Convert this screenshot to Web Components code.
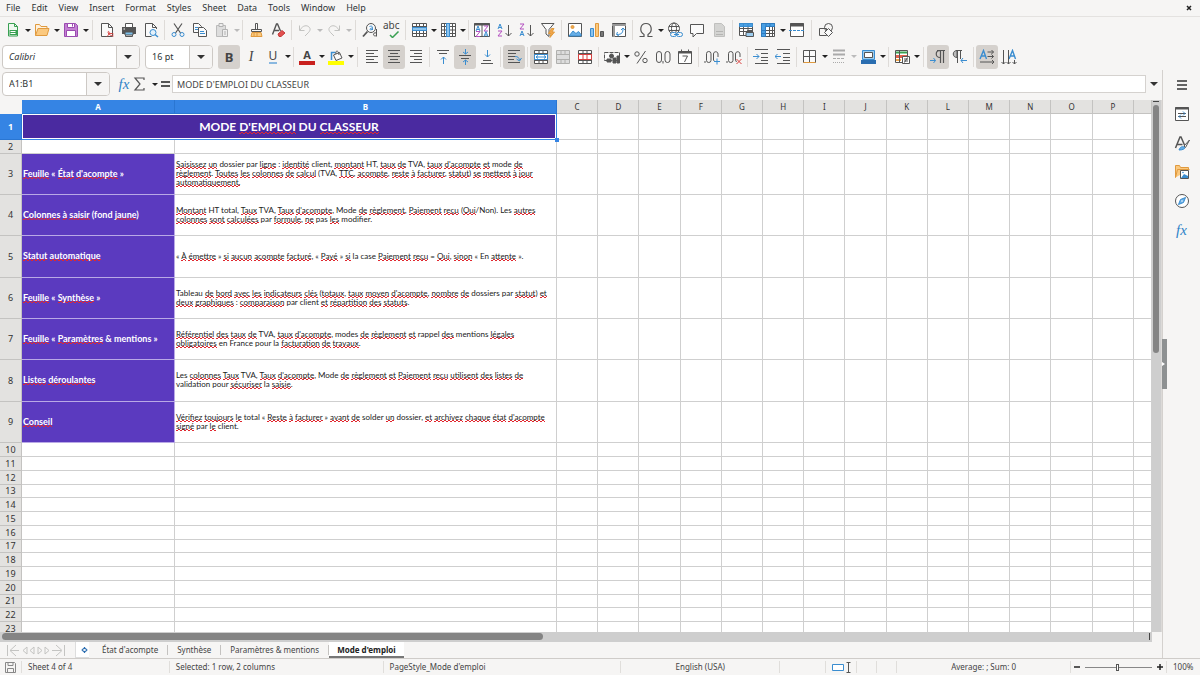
<!DOCTYPE html>
<html lang="en">
<head>
<meta charset="utf-8">
<title>Mode d'emploi - Calc</title>
<style>
html, body { margin: 0; height: 100%; }
body { font: 9px/12px "Noto Sans", sans-serif; color: #2e3436; background: #f6f5f4; overflow: hidden; }
</style>
</head>
<body>
<calc-app></calc-app>
<script>
const svg = (body, w = 16, h = 16) => `<svg width="${w}" height="${h}" viewBox="0 0 ${w} ${h}" fill="none" stroke="#555" stroke-width="1" aria-hidden="true">${body}</svg>`;
const B = '#3a8dd0', R = '#d8403f', O = '#e8a23c';
const lines = (rows) => rows.map(([x, y, w]) => `<path d="M${x} ${y + 0.5}h${w}"/>`).join('');
const tinyA = (x, y, c) => `<path d="M${x} ${y + 5}l2-5 2 5M${x + 1} ${y + 3.5}h2" stroke="${c}"/>`;
const tinyZ = (x, y, c) => `<path d="M${x} ${y}h4l-4 5h4" stroke="${c}"/>`;
const ICONS = {
  new: svg('<path d="M3.500 1.500h6l3 3v9.500h-9z" stroke="#39a052" fill="#eef8f0"/><path d="M9.500 1.500v3h3" stroke="#39a052"/><path d="M4.500 8h8v5h-8z" fill="#39a052" stroke="none"/><path d="M5.500 9.500h5M5.500 11.500h5" stroke="#fff"/>'),
  open: svg('<path d="M1.500 13.500v-11h4l1.500 2h6v2" stroke="#e09a3e" fill="#fff1dc"/><path d="M1.500 13.500l2.500-7h11l-2 7z" stroke="#e09a3e" fill="#fbc97f"/>'),
  save: svg('<path d="M1.500 1.500h11l2 2v11h-13z" stroke="#9a4bb0" fill="#c481d3"/><path d="M4.500 1.500h7v4h-7zM3.500 8.500h9v6h-9z" fill="#fff" stroke="#9a4bb0"/><path d="M9.500 2v2.500" stroke="#9a4bb0"/>'),
  pdf: svg('<path d="M3 1.500h6.500l4 4v9h-11v-13z" fill="#fafafa"/><path d="M9.500 1.500v4h4"/><path d="M8 14.500c3-3 2.500-5 1.500-5s-.5 4 5 4.500M9 12c2-1 4-.5 5.500 0" stroke="#d8403f"/>'),
  print: svg('<path d="M4.500 5v-3.500h7v3.500M4.500 12v2.500h7v-2.500" fill="#fff"/><path d="M1 5h14v7h-14z" fill="#555" stroke="none"/><path d="M4 10h8v3h-8z" fill="#7cc0ea" stroke="#555"/><path d="M2.500 7h1.500" stroke="#fff"/>'),
  preview: svg('<path d="M13.500 7v-1.500l-4-4h-7v13h6" fill="#fafafa"/><path d="M9.500 1.500v4h4"/><circle cx="10" cy="10.500" r="3" stroke="#3a8dd0" fill="#e3f1fb"/><path d="M12 12.500l3 2.500" stroke="#3a8dd0" stroke-width="1.500"/>'),
  cut: svg('<path d="M4 1.500l6.500 9.500M12 1.500l-6.500 9.500" stroke-width="1.200"/><circle cx="4" cy="12.500" r="2" stroke="#3a8dd0"/><circle cx="12" cy="12.500" r="2" stroke="#3a8dd0"/>'),
  copy: svg('<path d="M1.500 1.500h5l3 3v6h-8z" fill="#fafafa"/><path d="M6.500 5.500h5l3 3v6h-8z" fill="#fafafa"/><path d="M3 5.500h3M3 7.500h3M8 9.500h4M8 11.500h5" stroke="#3a8dd0"/>'),
  paste: svg('<path d="M2.500 3.500h9v11h-9z" fill="#ddd" stroke="#bbb"/><path d="M5 1.500h4v3h-4zM8.500 7.500h5v7h-5z" fill="#eee" stroke="#b2b2b2"/><path d="M10 10h2M10 12h2" stroke="#b2b2b2"/>'),
  brush: svg('<path d="M7.500 1.500h2v6h-2zM3.500 7.500h10v2h-10z" fill="#fafafa"/><path d="M4 10.500h9l1 4h-11z" fill="#fbc97f" stroke="#e09a3e"/><path d="M6 11v3M9 11v3" stroke="#e09a3e"/>'),
  clear: svg('<path d="M2.500 12.500l4-10.500h1l3 7M4 8.500h5" stroke-width="1.400"/><path d="M8 12l4-3.500 3 2.500-4 3.500h-2z" fill="#e2504f" stroke="#c43a3a"/>'),
  undo: svg('<path d="M2.500 3.500v5h5M3 8c3-5 7-5 9-3s1 4-1 6l-3 3" stroke="#c2c2c0"/>'),
  redo: svg('<path d="M13.500 3.500v5h-5M13 8c-3-5-7-5-9-3s-1 4 1 6l3 3" stroke="#c2c2c0"/>'),
  find: svg('<circle cx="9" cy="6" r="4.500" fill="#fafafa"/><path d="M5.500 9.500l-4.500 5" stroke-width="1.800"/><path d="M7.500 4.500c3-1 3 0 3 3.500M10.500 6c-3 0-3 2-1.500 2l1.500-1" stroke="#3a8dd0"/><path d="M14.500 7v7.500M14.500 11c-4-1.500-4 4.500 0 2.500"/>'),
  spell: svg('<path d="M6 13l2.500 2.500 6-6" stroke="#39a052" stroke-width="1.500"/>'),
  row: svg('<path d="M1.500 1.500h14v13h-14z" fill="#fff"/><path d="M1.500 4.500h14M1.500 11.500h14M5.500 1.500v13M8.500 1.500v13M12.500 1.500v13"/><path d="M1.500 5.500h14v3h-14z" fill="#8cc4ee" stroke="#3a8dd0"/>'),
  col: svg('<path d="M1.500 1.500h14v13h-14z" fill="#fff"/><path d="M1.500 4.500h14M1.500 8h14M1.500 11.500h14M4.500 1.500v13M12.500 1.500v13"/><path d="M6.500 1.500h3v13h-3z" fill="#8cc4ee" stroke="#3a8dd0"/>'),
  sort: svg('<path d="M.5 1.500h15v13h-15zM8 2v13" fill="#fff"/><path d="M0 2.500h16" stroke-width="2"/>' + tinyA(2, 4, B) + tinyZ(2, 9.5, '#b34fc0') + tinyZ(10, 4, '#b34fc0') + tinyA(10, 9.5, B)),
  az: svg(tinyA(2, 2, B) + tinyZ(2, 9, '#b34fc0') + '<path d="M12.500 3v11M9.500 11l3 3 3-3"/>'),
  za: svg(tinyZ(2, 2, '#b34fc0') + tinyA(2, 9, B) + '<path d="M12.500 3v11M9.500 11l3 3 3-3"/>'),
  filter: svg('<path d="M1.500 1.500h12.500l-5 6v7l-3-2.500v-4.500z" fill="#fafafa"/><path d="M11.500 6.500l-3 5h2.500l-1 4 4.500-5.500h-2.500l2-3.500z" fill="#f2a64a" stroke="#e09a3e"/>'),
  image: svg('<path d="M1.500 1.500h13v13h-13z" fill="#fff"/><path d="M2 14l4-5 3 2.500 2.500-2 2.500 3v1.500z" fill="#67aee6" stroke="#3a8dd0"/><circle cx="5.500" cy="5" r="1.500" fill="#f2a64a" stroke="#e09a3e"/>'),
  chart: svg('<path d="M1.500 6.500h3v8h-3z" fill="#8cc4ee" stroke="#3a8dd0"/><path d="M6.500 1.500h3v13h-3z" fill="#fbc97f" stroke="#e09a3e"/><path d="M11.500 9.500h3v5h-3z" fill="#777"/>'),
  pivot: svg('<path d="M1.500 1.500h13v13h-13z" fill="#fff"/><path d="M1 3h14M3 2v13" stroke="#999" stroke-width="2"/><path d="M6 12.500c5 0 6-2 6-6M6.500 10l-1 2.500 2.500 1.500M10 8l2-2 2 2" stroke="#3a8dd0"/>'),
  omega: svg('<path d="M1.500 14.500h4.500v-2c-5-3-4-11 2-11s7 8 2 11v2h4.500" stroke-width="1.200"/>'),
  link: svg('<circle cx="7" cy="6.500" r="5.500" fill="#fafafa"/><ellipse cx="7" cy="6.500" rx="2.500" ry="5.500"/><path d="M2 4.500h10M2 8.500h10"/><rect x="3.500" y="10.500" width="6" height="4" rx="2" stroke="#3a8dd0" fill="#f6f5f4"/><rect x="9.500" y="10.500" width="6" height="4" rx="2" stroke="#3a8dd0" fill="#f6f5f4"/><path d="M7 12.500h5" stroke="#3a8dd0"/>'),
  comment: svg('<path d="M1.500 2.500h13v9h-7l-3.500 3.500v-3.500h-2.500z" fill="#fafafa"/>'),
  header: svg('<path d="M3.500 1.500h7l3 3v10h-10z" fill="#d4d4d2" stroke="#c0c0be"/><path d="M5 9.500h7M5 12.500h7" stroke="#b5b5b3"/>'),
  area: svg('<path d="M1.500 1.500h13v12h-13zM1.500 6.500h13M1.500 9.500h13M5.500 1v13M10 1v13" fill="#fff"/><path d="M1.500 1.500h13v3h-13z" fill="#4aa0e4" stroke="#3a8dd0"/><path d="M5.500 2v2M10 2v2" stroke="#3a8dd0"/><path d="M8 10.500h7.500v4h-7.500z" fill="#9ccdf0"/><path d="M9.500 8.500h5v2h-5z" fill="#555"/>'),
  freeze: svg('<path d="M1.500 1.500h13v13h-13z" fill="#fff"/><path d="M1.500 8.500h13M1.500 11.500h13M9.500 1v13M12.500 1v13"/><path d="M1.500 1.500h13v3h-9v10h-4z" fill="#4aa0e4" stroke="#2f7cc0"/><path d="M2 8.500h4M2 11.500h4M6 2v3M10 2v3" stroke="#2f7cc0"/>'),
  split: svg('<path d="M1.500 1.500h13v13h-13z" fill="#fff"/><path d="M1 3h14" stroke-width="3"/><path d="M0 8.500h16" stroke="#3a8dd0" stroke-dasharray="3 1"/>'),
  shapes: svg('<circle cx="10.500" cy="5.500" r="4"/><path d="M1.500 6.500h7v7h-7z"/><path d="M10.500 6.500l4 4-4 4-4-4z" fill="#fafafa"/>'),
  left: svg(lines([[2, 1, 12], [2, 4, 8], [2, 7, 12], [2, 10, 8], [2, 13, 12]])),
  center: svg(lines([[2, 1, 12], [4, 4, 8], [2, 7, 12], [4, 10, 8], [2, 13, 12]])),
  right: svg(lines([[2, 1, 12], [6, 4, 8], [2, 7, 12], [6, 10, 8], [2, 13, 12]])),
  top: svg(lines([[2, 1, 12], [4, 4, 8]]) + '<path d="M8.500 15v-7M6 10.500l2.500-2.500 2.500 2.500" stroke="#3a8dd0"/>'),
  middle: svg(lines([[2, 6, 12], [4, 9, 8]]) + '<path d="M8.500 0v5M6 3l2.500 2 2.500-2M8.500 16v-5M6 13l2.500-2 2.500 2" stroke="#3a8dd0"/>'),
  bottom: svg(lines([[4, 11, 8], [2, 14, 12]]) + '<path d="M8.500 1v7M6 5.500l2.500 2.500 2.500-2.500" stroke="#3a8dd0"/>'),
  wrap: svg(lines([[2, 1, 12], [2, 4, 8], [2, 7, 7], [2, 10, 6], [2, 13, 12]]) + '<path d="M9 7.500c3 0 4 1 4.500 4M10.500 10l3 2 2-3" stroke="#3a8dd0"/>'),
  merge: svg('<path d="M1.500 1.500h13v13h-13zM1.500 4.500h13M1.500 11.500h13M6 1.500v3M10 1.500v3M6 11.500v3M10 11.500v3" fill="#fff"/><path d="M1.500 5.500h13v5h-13z" stroke="#3a8dd0" fill="#fff"/><path d="M3 8h10M5 6.500l-2 1.500 2 1.500M11 6.500l2 1.500-2 1.500" stroke="#3a8dd0"/>'),
  mergec: svg('<path d="M1.500 1.500h13v13h-13zM1.500 5.500h13M1.500 10.500h13M6 1.500v4M10 1.500v4M6 10.500v4M10 10.500v4" fill="#ddd" stroke="#b0b0ae"/>'),
  unmerge: svg('<path d="M1.500 1.500h13v13h-13zM1.500 4.500h13M1.500 11.500h13M6 1.500v3M10 1.500v3M6 11.500v3M10 11.500v3" fill="#fff"/><path d="M1.500 5.500h13v5h-13zM6 5.500v5M10 5.500v5" stroke="#d8403f" fill="#fff"/>'),
  money: svg('<path d="M.5 3.500h15v8h-15z" fill="#fafafa" stroke-dasharray="4 1"/><circle cx="7.500" cy="7" r="2" fill="#555"/><path d="M3 12v-2h4v3h-4zM9 9h3v5h-3zM13 7h2.500v7h-2.500z" fill="#555"/>'),
  percent: svg('<circle cx="4" cy="5" r="2.200"/><circle cx="12" cy="11.500" r="2.200"/><path d="M12.500 2l-8.500 12.500"/>'),
  number: svg('<rect x="1.500" y="2.500" width="5" height="11" rx="2.500"/><rect x="10" y="2.500" width="5" height="11" rx="2.500"/><path d="M8 12v2.500"/>'),
  date: svg('<path d="M1.500 2.500h13v12h-13z" fill="#fff"/><path d="M1.500 3.500h13" stroke-width="2"/><path d="M4.500 .5v3M11.500 .5v3M5.500 7h5l-3 6"/>'),
  adddec: svg('<path d="M1 12v2"/><rect x="2.500" y="2.500" width="4.500" height="11" rx="2.200"/><path d="M14 8v-3c0-3-4.500-3-4.500 0v6l1 1.500"/><path d="M10 12.500h6M13 9.500v6" stroke="#3a8dd0"/>'),
  deldec: svg('<path d="M1 12v2"/><rect x="2.500" y="2.500" width="4.500" height="11" rx="2.200"/><path d="M14 8v-3c0-3-4.500-3-4.500 0v6l1 2"/><path d="M10.500 10l5 5M15.500 10l-5 5" stroke="#d8403f"/>'),
  indent: svg(lines([[2, 0, 13], [8, 4, 7], [8, 8, 7], [8, 11, 7], [2, 14, 13]]) + '<path d="M0 7.500h6M3.500 5l2.500 2.500-2.500 2.500" stroke="#3a8dd0"/>'),
  outdent: svg(lines([[2, 0, 13], [8, 4, 7], [8, 8, 7], [8, 11, 7], [2, 14, 13]]) + '<path d="M6 7.500h-6M2.500 5l-2.500 2.500 2.500 2.500" stroke="#3a8dd0"/>'),
  borders: svg('<path d="M1.500 1.500h12v12h-12zM7.500 1.500v12M1.500 7.500h12" fill="#fafafa"/><path d="M1.500 13.500h12" stroke="#e09a3e"/>'),
  style: svg('<path d="M2 1.500h12M2 5.500h12" stroke="#aaa" stroke-width="2"/><path d="M2 9.500h12" stroke="#aaa" stroke-dasharray="3 1"/><path d="M2 13.500h12" stroke="#aaa" stroke-dasharray="1 1"/>'),
  bcolor: svg('<path d="M2.500 1.500h12v9h-12z" stroke="#3a8dd0" fill="#9ccdf0"/><path d="M4.500 3.500h8v5h-8z" fill="#fff"/><path d="M1 11h15v4h-15z" fill="#2a6db0" stroke="none"/>'),
  cond: svg('<path d="M1.500 1.500h12v12h-12z" fill="#fff"/><path d="M2 3.500h11" stroke="#39a052" stroke-width="2"/><path d="M2 7.500h11" stroke="#e2604f" stroke-width="3"/><path d="M2 11h5" stroke="#f2a64a" stroke-width="2"/><path d="M5.500 1.500v12"/><path d="M8.500 7.500h7v7h-7z" fill="#fff"/><path d="M10 10h4M10 12h4M13.500 8.500l-3 5"/>'),
  ltr: svg('<path d="M10.500 1v13M13.500 1v13M7 1.500h8M10 8.500c-5 0-5-7 0-7" stroke-width="1.200"/><path d="M0 11.500h5.500M3.500 9l2 2.500-2 2.500" stroke="#3a8dd0"/>'),
  rtl: svg('<path d="M5.500 1v13M8.500 1v9M4 1.500h6M5 8.500c-5 0-5-7 0-7z" fill="#bbb"/><path d="M15 11.500h-6M11 9l-2 2.500 2 2.500" stroke="#3a8dd0"/>'),
  horiz: svg('<path d="M1 10l3.500-8.500 3 8.500M2 7h5" stroke="#3a8dd0" stroke-width="1.400"/><path d="M8.500 3h6M8.500 7.500h6M1 13h14M12.500 1l2 2-2 2M12.500 5.500l2 2-2 2M13 11l2 2-2 2"/>'),
  vert: svg('<path d="M8 10l3.500-8.500 3 8.500M9 7h5" stroke="#3a8dd0" stroke-width="1.400"/><path d="M2.500 1v14M7.500 1v14M13.500 11v4M.5 13l2 2 2-2M5.500 13l2 2 2-2M11.500 13l2 2 2-2"/>'),
  sum: svg('<path d="M12 4v-2h-9l5 6-5 6h9v-2" stroke-width="1.200"/>'),
  equal: svg('<path d="M4 6h9M4 10h9" stroke-width="2"/>'),
  props: svg('<path d="M1.500 1.500h13v13h-13z" fill="#fff"/><path d="M1 2.500h14" stroke-width="2"/><path d="M4 7.500h8M4 10.500h8"/><path d="M9 5.500l2 2-2 2M7 8.500l-2 2 2 2" stroke="#3a8dd0"/>'),
  styles: svg('<path d="M1.500 13l4.500-11h1l3.500 8M3.500 9.500h5" stroke-width="1.500"/><path d="M15.500 5l-5.500 6 1.500 1.500z" fill="#fff"/><path d="M5 15c1-3 3-4 5-3s0 3-5 3z" fill="#67aee6" stroke="#3a8dd0"/>'),
  gallery: svg('<path d="M1.500 13.500v-12h4l1 2h8v2M1.500 13.500l2-8h12" stroke="#e09a3e" fill="#fbc97f"/><path d="M6.500 6.500h8v8h-8z" fill="#fff"/><path d="M7 14l3-4 4 2v2z" fill="#3a8dd0" stroke="none"/><circle cx="9" cy="8.500" r=".8" fill="#3a8dd0" stroke="none"/>'),
  compass: svg('<circle cx="8" cy="8" r="6.500" fill="#fff"/><path d="M11.500 4.500l-2 5-5 2 2-5z" fill="#67aee6" stroke="#3a8dd0"/><circle cx="8" cy="8" r=".8" fill="#fff" stroke="none"/>'),
  menu: svg('<path d="M3 4h10M3 8h10M3 12h10" stroke="#333" stroke-width="1.600"/>')
};
const letters = {
  bold: '<b class="bold">B</b>',
  italic: '<i class="italic">I</i>',
  underline: '<u class="u">U</u>',
  fontcolor: '<span class="bar" style="--bar:#c9211e">A</span>',
  fx: '<i class="fx">fx</i>',
  spell: '<span class="abc">abc</span>' + ICONS.spell,
  fill: `<span class="bar" style="--bar:#ffff00">${svg('<path d="M3.500 11v-7.500h4" stroke="#3a8dd0" stroke-width="1.500"/><path d="M5.500 6l6-2.500 2.500 5.500-6 2.500z" fill="#fafafa"/><path d="M8 5c-1-4 3-4 3 1"/>', 16, 12)}</span>`
};

class ToolButton extends HTMLElement {
  connectedCallback() {
    const name = this.getAttribute('icon'), drop = this.hasAttribute('drop'), off = this.hasAttribute('off');
    this.attachShadow({ mode: 'open' }).innerHTML = `<style>
      :host { display: flex; flex: none; align-items: center; }
      button { border: 0; background: none; padding: 0; font: inherit; color: #444; display: flex; align-items: center; justify-content: center; height: 24px; }
      .main { width: 22px; border-radius: 3px; position: relative; }
      :host([on]) .main { background: #d5d1cd; }
      .drop { width: 7px; }
      .drop::before { content: ""; border: 3px solid transparent; border-bottom: 0; border-top-color: ${off ? '#bbb' : '#222'}; }
      svg { display: block; }
      .bold { font: bold 13px/16px "Noto Sans", sans-serif; }
      .italic { font: italic 14px/16px "Liberation Serif", serif; }
      .u { font: 12px/13px "Noto Sans", sans-serif; text-decoration: none; border-bottom: 2px solid #8ab8e0; }
      .bar { font: bold 11px/12px "Noto Sans", sans-serif; width: 16px; border-bottom: 4px solid var(--bar); }
      .fx { font: italic 15px/18px "Liberation Serif", serif; color: #2f83c8; }
      .abc { font: 10px/12px "Noto Sans", sans-serif; position: absolute; top: 1px; left: 2px; }
    </style><button class="main" aria-label="${name}">${letters[name] || ICONS[name]}</button>${drop ? `<button class="drop" aria-label="${name} options"></button>` : ''}`;
  }
}
customElements.define('tool-button', ToolButton);

class ComboBox extends HTMLElement {
  connectedCallback() {
    this.attachShadow({ mode: 'open' }).innerHTML = `<style>
      :host { display: flex; flex: none; box-sizing: border-box; height: 24px; border: 1px solid #cdc9c5; border-radius: 4px; background: #fff; overflow: hidden; }
      input { flex: 1; min-width: 0; border: 0; padding: 0 0 0 6px; font: inherit; color: #2e3436; background: none; outline: 0; }
      button { width: 23px; border: 0; border-left: 1px solid #cdc9c5; background: #f6f5f4; padding: 0; display: flex; align-items: center; justify-content: center; }
      button::before { content: ""; border: 4px solid transparent; border-bottom: 0; border-top-color: #333; }
    </style><input aria-label="${this.getAttribute('label')}" value="${this.getAttribute('value')}"><button aria-label="Open list"></button>`;
  }
}
customElements.define('combo-box', ComboBox);

class MenuBar extends HTMLElement {
  connectedCallback() {
    this.attachShadow({ mode: 'open' }).innerHTML = `<style>
      :host { display: flex; height: 16px; border-bottom: 1px solid #e4e2e0; justify-content: space-between; }
      nav { display: flex; gap: 1px; padding-left: 1px; }
      button { border: 0; background: none; font: inherit; color: inherit; padding: 0 5px; white-space: nowrap; }
      .close { width: 22px; padding: 0; display: flex; align-items: center; justify-content: center; }
    </style><nav>${['File', 'Edit', 'View', 'Insert', 'Format', 'Styles', 'Sheet', 'Data', 'Tools', 'Window', 'Help'].map(m => `<button>${m}</button>`).join('')}</nav>
    <button class="close" aria-label="Close document">${svg('<path d="M1 1l4 4M5 1l-4 4" stroke="#222" stroke-width="1.500"/>', 6, 6)}</button>`;
  }
}
customElements.define('menu-bar', MenuBar);

class ToolBar extends HTMLElement {
  connectedCallback() {
    const items = this.getAttribute('items').trim().split(/\s+/).map(t => {
      if (t === '|') return '<i class="sep"></i>';
      if (t === '||') return '<i class="sep wide"></i>';
      const [name, ...flags] = t.split(':');
      return `<tool-button icon="${name}" ${flags.join(' ')}></tool-button>`;
    }).join('');
    this.attachShadow({ mode: 'open' }).innerHTML = `<style>
      :host { display: flex; align-items: center; padding: 0 2px; height: 26px; }
      .sep { flex: none; width: 5px; height: 20px; background: linear-gradient(#dedbd8, #dedbd8) center / 1px 100% no-repeat; }
      .wide { width: 7px; }
    </style><slot></slot>${items}`;
  }
}
customElements.define('tool-bar', ToolBar);

class FormulaBar extends HTMLElement {
  connectedCallback() {
    this.attachShadow({ mode: 'open' }).innerHTML = `<style>
      :host { display: flex; align-items: center; padding: 0 0 2px 2px; height: 28px; }
      combo-box { width: 108px; margin-right: 3px; }
      tool-button[icon=fx] { margin-right: -6px; }
      tool-button[icon=equal] { margin: 0 -4px; }
      .line { flex: 1; min-width: 0; box-sizing: border-box; height: 18px; border: 1px solid #d5d2cf; background: #fff; padding: 0 4px; font: inherit; color: #444; outline: 0; }
      .expand { width: 16px; height: 18px; border: 0; padding: 0; background: none; display: flex; align-items: center; justify-content: center; }
      .expand::before { content: ""; border: 4px solid transparent; border-bottom: 0; border-top-color: #333; }
    </style><combo-box label="Name box" value="A1:B1"></combo-box><tool-button icon="fx"></tool-button><tool-button icon="sum" drop></tool-button><tool-button icon="equal"></tool-button>
    <input class="line" aria-label="Formula" value="MODE D'EMPLOI DU CLASSEUR"><button class="expand" aria-label="Expand formula bar"></button>`;
  }
}
customElements.define('formula-bar', FormulaBar);

/* Words in [brackets] are underlined by the spelling checker; "/" between spaces breaks the line. */
const HELP = [
  ["[Feuille] « [État] [d'acompte] »", "[Saisissez] [un] dossier par [ligne] : [identité] client, [montant] HT, [taux] [de] TVA, [taux] [d'acompte] [et] mode [de] / [règlement]. [Toutes] [les] [colonnes] [de] [calcul] (TVA, [TTC], [acompte], [reste] [à] [facturer], [statut]) [se] [mettent] [à] [jour] / [automatiquement.]"],
  ["[Colonnes] [à] [saisir] (fond [jaune])", "[Montant] HT total, [Taux] TVA, [Taux] [d'acompte], Mode [de] [règlement], [Paiement] [reçu] ([Oui]/Non). Les [autres] / [colonnes] [sont] [calculées] par [formule], [ne] pas [les] modifier."],
  ["[Statut] [automatique]", "« [À] [émettre] » [si] [aucun] [acompte] [facturé], « [Payé] » [si] la case [Paiement] [reçu] = [Oui], [sinon] « En [attente] »."],
  ["[Feuille] « [Synthèse] »", "Tableau [de] [bord] [avec] [les] [indicateurs] [clés] ([totaux], [taux] [moyen] [d'acompte], [nombre] [de] dossiers par [statut]) [et] / [deux] [graphiques] : [comparaison] par client [et] [répartition] [des] [statuts]."],
  ["[Feuille] « [Paramètres] & mentions »", "[Référentiel] [des] [taux] [de] TVA, [taux] [d'acompte], modes [de] [règlement] [et] rappel [des] mentions [légales] / [obligatoires] en France pour la [facturation] [de] [travaux]."],
  ["[Listes] [déroulantes]", "Les [colonnes] [Taux] TVA, [Taux] [d'acompte], Mode [de] [règlement] [et] [Paiement] [reçu] [utilisent] [des] [listes] [de] / validation pour [sécuriser] la [saisie]."],
  ["[Conseil]", "[Vérifiez] [toujours] [le] total « [Reste] [à] [facturer] » [avant] [de] solder [un] dossier, [et] [archivez] [chaque] [état] [d'acompte] / [signé] par [le] client."]
];
const spell = t => t.replace(/&/g, '&amp;').replace(/ \/ /g, '<br>').replace(/\[(.*?)\]/g, '<s>$1</s>');

class SheetGrid extends HTMLElement {
  connectedCallback() {
    const cols = 'CDEFGHIJKLMNOP'.split('');
    const blank = '<td></td>'.repeat(15);
    const body = [`<tr class="r1"><th class="sel">1</th><td colspan="2" class="title">MODE ${spell("[D'EMPLOI]")} DU ${spell('[CLASSEUR]')}</td>${blank}</tr>`, `<tr><th>2</th><td></td><td></td>${blank}</tr>`];
    HELP.forEach(([a, b], i) => body.push(`<tr class="tall"><th>${i + 3}</th><td class="label">${spell(a)}</td><td class="text">${spell(b)}</td>${blank}</tr>`));
    for (let n = 10; n < 24; n++) body.push(`<tr><th>${n}</th><td></td><td></td>${blank}</tr>`);
    this.attachShadow({ mode: 'open' }).innerHTML = `<style>
      :host { display: grid; grid-template: minmax(0, 1fr) 10px / minmax(0, 1fr) 10px; min-height: 0; flex: 1; }
      .view { overflow: hidden; background: #fff; }
      table { border-collapse: separate; border-spacing: 0; table-layout: fixed; width: 100%; }
      .rh { width: 22px; } .a { width: 153px; } .b { width: 382px; } .z { width: 18px; }
      th, td { box-sizing: border-box; padding: 0; border: 0 solid #cfcfcf; border-width: 0 1px 1px 0; height: 14px; overflow: hidden; }
      tbody tr:nth-child(4n+1):not(.tall):not(.r1) > * { height: 13px; }
      th { font-weight: 400; font-size: 9px; line-height: 12px; background: #e3e2e0; color: #333; border-color: #c4c3c1; }
      thead th { font-size: 8px; }
      .sel { background: #3584e4; color: #fff; font-weight: 700; border-color: #2a76d2; }
      .corner { background: #f6f5f4; border-color: #f6f5f4; }
      .tall > * { height: 41px; }
      .tall:nth-child(3n+2) > * { height: 42px; }
      .r1 > * { height: 26px; }
      .title { position: relative; overflow: visible; text-align: center; color: #fff; font: bold 12px/16px Lato, sans-serif; background: #4a2aa0; border-color: #3584e4; box-shadow: inset 0 0 0 1px #fff; }
      .title::after { content: ""; position: absolute; right: -3px; bottom: -3px; width: 4px; height: 4px; background: #3584e4; }
      .label { background: #5b3abf; color: #fff; font: bold 9px/12px Lato, sans-serif; padding: 0 0 1px 1px; border-color: #b9a9e6; white-space: nowrap; }
      .text { font: 8px/9px Lato, sans-serif; color: #222; padding: 0 0 1px 1px; white-space: nowrap; }
      s { text-decoration: none; padding-bottom: 1px; background: url("data:image/svg+xml,%3Csvg xmlns='http://www.w3.org/2000/svg' width='4' height='3'%3E%3Cpath d='M-1 0l2 2 2-2 2 2' fill='none' stroke='%23e0282f'/%3E%3C/svg%3E") left bottom / 4px 3px repeat-x; }
      .v, .h { background: #cecece; position: relative; }
      .v { padding: 5px 2px 0 1px; border-right: 1px solid #dcdad8; }
      .v::before, .h::before { content: ""; display: block; background: #848484; border-radius: 4px; }
      .v::before { height: 47%; width: 6px; }
      .v::after { content: ""; position: absolute; top: 1px; left: 1px; width: 6px; height: 1px; background: #444; }
      .h { padding: 1px 0 2px 2px; }
      .h::before { width: 47%; height: 7px; }
      .h::after { content: ""; position: absolute; right: 2px; top: 1px; width: 1px; height: 7px; background: #444; }
    </style>
    <div class="view"><table><colgroup><col class="rh"><col class="a"><col class="b">${'<col>'.repeat(14)}<col class="z"></colgroup>
    <thead><tr><th class="corner"></th><th class="sel">A</th><th class="sel">B</th>${cols.map(c => `<th>${c}</th>`).join('')}<th></th></tr></thead>
    <tbody>${body.join('')}</tbody></table></div><div class="v"></div><div class="h"></div>`;
  }
}
customElements.define('sheet-grid', SheetGrid);

class SheetTabs extends HTMLElement {
  connectedCallback() {
    const nav = svg('<path d="M1.500 1v11M10 1l-6 5.500 6 5.500M21 3l-4 3.500 4 3.500v-7M28 3l-4 3.500 4 3.500v-7M32 3l4 3.500-4 3.500v-7M39 3l4 3.500-4 3.500v-7M50 1l6 5.500-6 5.500M58.500 1v11M4 6.500h9M46 6.500h9" stroke="#c4c4c2"/>', 60, 13);
    this.attachShadow({ mode: 'open' }).innerHTML = `<style>
      :host { display: flex; height: 16px; align-items: stretch; padding-left: 6px; font-size: 8px; }
      button { border: 0; background: none; font: inherit; color: #444; padding: 0 9px; white-space: nowrap; }
      .nav, .add { padding: 0; display: flex; align-items: center; }
      .add { margin: 0 4px 0 9px; width: 14px; background: #fff; box-shadow: inset 1px -1px #ddd; }
      .tab { border-right: 1px solid #d0cecb; border-image: linear-gradient(transparent 25%, #c4c2c0 25% 75%, transparent 75%) 1; }
      .on { background: #fff; font-weight: 700; color: #222; box-shadow: inset 0 -2px #777; padding: 0 8px; }
    </style><button class="nav" aria-label="Scroll tabs">${nav}</button><button class="add" aria-label="Add sheet">${svg('<circle cx="9.500" cy="7" r="2" stroke="#2a6db0"/><path d="M9.500 4v6M6.500 7h6" stroke="#2a6db0"/><circle cx="9.500" cy="7" r="1" fill="#fff" stroke="none"/>', 14, 14)}</button>
    <button class="tab">État d'acompte</button><button class="tab">Synthèse</button><button class="tab">Paramètres &amp; mentions</button><button class="on">Mode d'emploi</button>`;
  }
}
customElements.define('sheet-tabs', SheetTabs);

class SideBar extends HTMLElement {
  connectedCallback() {
    this.attachShadow({ mode: 'open' }).innerHTML = `<style>
      :host { display: flex; flex-direction: column; align-items: center; gap: 5px; width: 38px; flex: none; box-sizing: border-box; padding-top: 3px; position: relative; border-left: 1px solid #d4d1ce; }
      .grip { position: absolute; left: -1px; top: 269px; width: 5px; height: 50px; border: 0; padding: 0; background: #8e9192; display: flex; align-items: center; }
      .grip::before { content: ""; border: 2px solid transparent; border-width: 2px 0 2px 3px; border-left-color: #fff; }
    </style>${['menu', 'props', 'styles', 'gallery', 'compass', 'fx'].map(n => `<tool-button icon="${n}"></tool-button>`).join('')}<button class="grip" aria-label="Hide sidebar"></button>`;
  }
}
customElements.define('side-bar', SideBar);

class StatusBar extends HTMLElement {
  connectedCallback() {
    this.attachShadow({ mode: 'open' }).innerHTML = `<style>
      :host { display: grid; grid-template-columns: 22px 148fr 214fr 238fr 159fr 46px 31px 20px 20px 174fr 96px 33px; height: 16px; border-top: 1px solid #cfccc9; font-size: 8px; align-items: center; color: #444; }
      div { box-sizing: border-box; height: 12px; border-right: 1px solid #e0dedb; padding-left: 6px; white-space: nowrap; display: flex; align-items: center; }
      div:last-child { border: 0; }
      .c { justify-content: center; padding: 0; }
      button { border: 0; background: none; padding: 0; width: 12px; height: 12px; display: flex; align-items: center; justify-content: center; }
      input { flex: 1; min-width: 0; margin: 0 2px; height: 10px; appearance: none; background: linear-gradient(#888, #888) center / 100% 1px no-repeat; }
      input::-webkit-slider-thumb { appearance: none; box-sizing: border-box; width: 3px; height: 7px; border: 1px solid #555; background: #fff; }
    </style>
    <div class="c">${svg('<path d="M1.500 1.500h9l1 1v9h-10zM4 1.500v3h5v-3M3.500 11.500v-4h6v4" stroke="#888"/>', 13, 13)}</div>
    <div>Sheet 4 of 4</div><div>Selected: 1 row, 2 columns</div><div>PageStyle_Mode d'emploi</div><div class="c">English (USA)</div><div></div>
    <div class="c">${svg('<path d="M1.500 3.500h11v6h-11z" stroke="#3a8dd0" fill="#fff"/><path d="M17.500 1.500v10M15.500 1.500h4M15.500 11.500h4"/>', 21, 13)}</div><div></div><div></div>
    <div class="c">Average: ; Sum: 0</div>
    <div class="c"><button aria-label="Zoom out">${svg('<path d="M1 4h6" stroke="#222" stroke-width="1.500"/>', 8, 8)}</button><input type="range" aria-label="Zoom" min="0" max="100" value="49"><button aria-label="Zoom in">${svg('<path d="M1 4h6M4 1v6" stroke="#222" stroke-width="1.500"/>', 8, 8)}</button></div>
    <div>100%</div>`;
  }
}
customElements.define('status-bar', StatusBar);

class CalcApp extends HTMLElement {
  connectedCallback() {
    this.attachShadow({ mode: 'open' }).innerHTML = `<style>
      :host { display: flex; flex-direction: column; height: 100vh; }
      .text-tools { height: 27px; }
      .main { flex: 1; min-height: 0; display: flex; }
      .doc { flex: 1; min-width: 0; display: flex; flex-direction: column; }
      .font { width: 138px; margin-right: 5px; font-style: italic; }
      .size { width: 68px; margin-right: 5px; }
    </style>
    <menu-bar></menu-bar>
    <tool-bar items="new:drop open:drop save:drop || pdf print preview | cut copy paste:drop:off | brush clear | undo:drop:off redo:drop:off || find spell | row:drop col:drop | sort az za filter | image chart pivot | omega:drop link comment header | area freeze:drop split || shapes"></tool-bar>
    <tool-bar class="text-tools" items="bold:on italic underline:drop | fontcolor:drop fill:drop || left center:on right | top middle:on bottom | wrap:on | merge:on mergec unmerge | money:drop percent number date | adddec deldec | indent outdent | borders:drop style:drop:off bcolor:drop | cond:drop || ltr:on rtl | horiz:on vert"><combo-box class="font" label="Font name" value="Calibri"></combo-box><combo-box class="size" label="Font size" value="16 pt"></combo-box></tool-bar>
    <div class="main"><div class="doc"><formula-bar></formula-bar><sheet-grid></sheet-grid><sheet-tabs></sheet-tabs></div><side-bar></side-bar></div>
    <status-bar></status-bar>`;
  }
}
customElements.define('calc-app', CalcApp);
</script>
</body>
</html>
